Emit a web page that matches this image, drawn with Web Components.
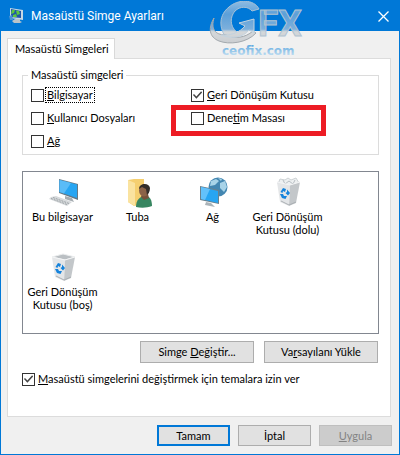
<!DOCTYPE html>
<html lang="tr">
<head>
<meta charset="utf-8">
<title>Masaüstü Simge Ayarları</title>
<style>
body{
  margin: 0;
  font: 11px/14px Lato, "Liberation Sans", sans-serif;
  color: #000;
}
.options{
  display: grid;
  grid-template-columns: 160px 1fr;
  row-gap: 7px;
}
.marked{
  position: relative;
}
.actions{
  display: flex;
  justify-content: flex-end;
  gap: 10px;
  margin: 7px 1px 8px 0;
}
.actions push-button{
  width: 114px;
  height: 22px;
}
.footer push-button{
  width: 73px;
  height: 21px;
}
.footer{
  display: flex;
  justify-content: flex-end;
  gap: 8px;
}
u{
  text-decoration-skip-ink: none;
}
</style>
</head>
<body>
<dialog-window>
  <span slot="title">Masaüstü Simge Ayarları</span>
  <brand-stamp slot="stamp"></brand-stamp>
  <tab-panel label="Masaüstü Simgeleri">
    <group-box label="Masaüstü simgeleri">
      <div class="options">
        <check-option focused><u>B</u>ilgisayar</check-option>
        <check-option checked><u>G</u>eri Dönüşüm Kutusu</check-option>
        <check-option><u>K</u>ullanıcı Dosyaları</check-option>
        <div class="marked"><check-option>Dene<u>t</u>im Masası</check-option><mark-box></mark-box></div>
        <check-option><u>A</u>ğ</check-option>
      </div>
    </group-box>
    <icon-list>
      <desktop-icon icon="computer">Bu bilgisayar</desktop-icon>
      <desktop-icon icon="user">Tuba</desktop-icon>
      <desktop-icon icon="network">Ağ</desktop-icon>
      <desktop-icon icon="full">Geri Dönüşüm Kutusu (dolu)</desktop-icon>
      <desktop-icon icon="empty">Geri Dönüşüm Kutusu (boş)</desktop-icon>
    </icon-list>
    <div class="actions">
      <push-button>Simge <u>D</u>eğiştir...</push-button>
      <push-button>Va<u>r</u>sayılanı Yükle</push-button>
    </div>
    <check-option checked><u>M</u>asaüstü simgelerini değiştirmek için temalara izin ver</check-option>
  </tab-panel>
  <div class="footer" slot="footer">
    <push-button primary>Tamam</push-button>
    <push-button>İptal</push-button>
    <push-button disabled><u>U</u>ygula</push-button>
  </div>
</dialog-window>

<script>
function attach (element, html) {
  var template = document.createElement('template')
  template.innerHTML = html
  element.attachShadow({ mode: 'open' })
  element.shadowRoot.appendChild(template.content.cloneNode(true))
}

class DialogWindow extends HTMLElement {
  constructor () {
    super()
    attach(this, /* HTML */ `
<style>
:host{
  display: flex;
  flex-direction: column;
  position: relative;
  box-sizing: border-box;
  min-height: 100vh;
  border: 1px solid #0078d7;
  background: #f0f0f0;
}
header{
  display: flex;
  align-items: center;
  height: 30px;
  padding: 0 10px 0 7px;
  background: #0078d7;
  color: #fff;
  font: 12px/16px Roboto, sans-serif;
}
header svg{
  flex: none;
}
h1{
  flex: 1;
  margin: 0 0 0 7px;
  font: inherit;
}
button{
  display: flex;
  padding: 0;
  border: 0;
  background: none;
}
main{
  flex: 1;
  display: flex;
  flex-direction: column;
  gap: 8px;
  padding: 7px 7px 8px 6px;
}
</style>
<header>
  <svg width="16" height="16" viewBox="0 0 16 16">
    <path d="M2 0 L15 2 L15 12 L2 10 Z" fill="#c5d8e4"/>
    <path d="M3 1 L13 3 L13 10 L3 9 Z" fill="#1f57a8"/>
    <path d="M4 2 L7 2 L6 5 L3 6 Z M8 2.500 L11 3 L12 6 L9 7 Z M5 7 L8 6 L9 9 L5 9 Z" fill="#5cc63f"/>
    <path d="M1 8 L4 7 L5 12 L2 12 Z" fill="#4c93d2"/>
    <path d="M7 11 L12 11 L12 13 L14 14 L12 15 L6 15 L4 13 Z" fill="#b9c3c9"/>
  </svg>
  <h1><slot name="title"></slot></h1>
  <button aria-label="Kapat">
    <svg width="11" height="11" viewBox="0 0 11 11"><path d="M.5 .5 L10.500 10.500 M10.500 .5 L.5 10.500" stroke="#fff" stroke-width="1.300"/></svg>
  </button>
</header>
<slot name="stamp"></slot>
<main>
  <slot></slot>
  <slot name="footer"></slot>
</main>
`)
  }
}

class BrandStamp extends HTMLElement {
  constructor () {
    super()
    attach(this, /* HTML */ `
<style>
:host{
  position: absolute;
  top: 0;
  right: 96px;
  width: 94px;
  pointer-events: none;
}
svg{
  display: block;
}
</style>
<svg width="94" height="58" viewBox="0 0 94 58">
  <defs>
    <linearGradient id="metal" x1="0" y1="0" x2="0" y2="44" gradientUnits="userSpaceOnUse">
      <stop offset="0" stop-color="#8fbce2"/>
      <stop offset=".3" stop-color="#5c9fd8"/>
      <stop offset=".64" stop-color="#7db0dc"/>
      <stop offset=".7" stop-color="#d5d8da"/>
      <stop offset="1" stop-color="#c9ccd0"/>
    </linearGradient>
    <linearGradient id="name" x1="0" y1="44" x2="0" y2="55" gradientUnits="userSpaceOnUse">
      <stop offset="0" stop-color="#5fa9e0"/>
      <stop offset="1" stop-color="#c5e0f2"/>
    </linearGradient>
  </defs>
  <path d="M43 10 L50 8 C45 -2 29 -2 20 6 C10 14 10 26 16 35 C20 37 26 37 31 33 C21 28 20 17 26 10 C31 5 39 5 43 10 Z" fill="url(#metal)" stroke="#a9c2d6"/>
  <path d="M5 17 C-1 27 0 36 10 40 C20 44 38 42 47 32 L44 30 C36 37 26 38 17 34 C5 34 2 27 5 17 Z" fill="url(#metal)" stroke="#a3a9ae"/>
  <path d="M12 34 C22 35 31 31 36 25 L30 22 L45 18 L45 32 L40 29 C34 37 22 38 12 34 Z" fill="url(#metal)" stroke="#c3d3df"/>
  <text x="49" y="35" font-family="Roboto" font-size="37" font-weight="bold" fill="url(#metal)" stroke="#b1c3d1">FX</text>
  <text x="13" y="54" font-family="DejaVu Sans" font-size="12" font-weight="bold" fill="url(#name)">ceofix.com</text>
</svg>
`)
  }
}

class TabPanel extends HTMLElement {
  constructor () {
    super()
    attach(this, /* HTML */ `
<style>
:host{
  flex: 1;
  display: flex;
  flex-direction: column;
  align-items: flex-start;
  padding-right: 1px;
}
.tab{
  z-index: 1;
  box-sizing: border-box;
  height: 21px;
  margin-bottom: -1px;
  padding: 2px 5px 2px 7px;
  border: 1px solid #d9d9d9;
  border-bottom: 0;
  background: #fff;
  color: inherit;
  font: inherit;
}
.panel{
  flex: 1;
  align-self: stretch;
  padding: 9px 11px 9px 14px;
  border: 1px solid #dcdcdc;
  background: #fff;
}
</style>
<button class="tab" role="tab" aria-selected="true"></button>
<div class="panel" role="tabpanel"><slot></slot></div>
`)
    this.shadowRoot.querySelector('.tab').textContent = this.getAttribute('label')
  }
}

class GroupBox extends HTMLElement {
  constructor () {
    super()
    attach(this, /* HTML */ `
<style>
:host{
  display: block;
  margin-bottom: 16px;
}
fieldset{
  margin: 0;
  padding: 5px 8px;
  border: 1px solid #dcdcdc;
}
legend{
  margin-left: -3px;
  padding: 0 3px;
}
</style>
<fieldset><legend></legend><slot></slot></fieldset>
`)
    this.shadowRoot.querySelector('legend').textContent = this.getAttribute('label')
  }
}

class CheckOption extends HTMLElement {
  constructor () {
    super()
    attach(this, /* HTML */ `
<style>
:host{
  display: block;
}
label{
  display: flex;
  align-items: center;
  gap: 2px;
  height: 16px;
}
input{
  appearance: none;
  flex: none;
  box-sizing: border-box;
  width: 13px;
  height: 13px;
  margin: 0;
  border: 1px solid #333;
  background: #fff;
}
input:checked::before{
  content: "";
  display: block;
  height: 11px;
  background: #444;
  clip-path: polygon(9% 50%, 18% 41%, 40% 64%, 83% 17%, 92% 27%, 40% 83%);
}
span{
  padding: 0 1px;
}
:host([focused]) span{
  outline: 1px dotted #000;
}
</style>
<label><input type="checkbox"><span><slot></slot></span></label>
`)
    this.shadowRoot.querySelector('input').checked = this.hasAttribute('checked')
  }
}

class MarkBox extends HTMLElement {
  constructor () {
    super()
    attach(this, /* HTML */ `
<style>
:host{
  position: absolute;
  top: -5px;
  left: -20px;
  box-sizing: border-box;
  width: 155px;
  height: 31px;
  border: 5px solid #ed1c24;
  pointer-events: none;
}
</style>
`)
  }
}

class IconList extends HTMLElement {
  constructor () {
    super()
    attach(this, /* HTML */ `
<style>
:host{
  display: grid;
  grid-template-columns: repeat(auto-fill, 75px);
  grid-auto-rows: 75px;
  box-sizing: border-box;
  min-height: 163px;
  padding: 4px 2px;
  border: 1px solid #828790;
}
</style>
<slot></slot>
`)
  }
}

var bin = `
    <path d="M5 6 L18 9 L17 30 L8 26 Z" fill="#e4e6e8"/>
    <path d="M18 9 L28 6 L24 27 L17 30 Z" fill="#c3c7ca"/>
    <path d="M5 6 L18 9 L28 6" fill="none" stroke="#f4f5f6"/>
    <path d="M9 25 L17 29 L24 26" fill="none" stroke="#abb0b4"/>
    <path d="M8.500 16 L11 12 L14 13 L13 16 L11 15 L10.500 17 Z M15 13.500 L18 17 L16 19.500 L13.500 17 L15 16 Z M8 18 L11 18 L12 20 L15 20 L13.500 23 L10 22 Z" fill="#1583dc"/>`

var icons = {
  computer: `
    <path d="M12 3 L31 8 L31 24 L12 17 Z" fill="#657986"/>
    <path d="M12.500 4 L30 8.500 L30 22 L12.500 16 Z" fill="#27a5f2"/>
    <path d="M12.500 4 L24 7 L17 17.500 L12.500 16 Z" fill="#5abcf7"/>
    <path d="M18 20 L25 22 L27 26 L18 23 Z" fill="#a6adb2"/>
    <path d="M4 21 L9 20 L25 26 L20 30 L2 23 Z" fill="#d7dadc"/>
    <path d="M4 22.500 L20 28.500 M6 21.500 L22 27.500" stroke="#9aa1a5" stroke-dasharray="2 1"/>`,
  user: `
    <path d="M6 4 L12 3 L22 3 L22 28 L12 30 L6 26 Z" fill="#f5cf70"/>
    <path d="M6 4 L13 7 L13 30 L6 26 Z" fill="#fae3a0"/>
    <path d="M14 31 C14 24 18 20 23 20 C28 20 30 24 30 30 C25 32 19 32 14 31 Z" fill="#388661"/>
    <path d="M20 18 L26 18 L27 22 L22 24 L19 21 Z" fill="#75513b"/>
    <ellipse cx="22" cy="14.500" rx="5" ry="6" fill="#8b6248"/>
    <path d="M17 13 C17 7 27 6 28 12 C28 16 26 18 25 19 L24 13 L20 11 Z" fill="#332d2a"/>`,
  network: `
    <circle cx="21" cy="11" r="9.500" fill="#4386b1"/>
    <path d="M14 5 L19 3 L22 5 L18 9 L13 10 Z M23 7 L28 5 L30 11 L27 16 L23 12 Z M21 2 L25 3 L24 5 Z" fill="#a8d3e8"/>
    <path d="M3 10 L22 14 L22 28 L3 24 Z" fill="#69818e"/>
    <path d="M4 11 L21 15 L21 27 L4 23 Z" fill="#27a5f2"/>
    <path d="M4 11 L13 13 L8 24 L4 23 Z" fill="#63c1fa"/>
    <path d="M9 26 L14 27 L18 31 L8 29 Z" fill="#aab3b8"/>`,
  full: `
    <path d="M6 8 L8 3 L13 4 L16 2 L19 4 L24 2 L27 7 L18 11 Z" fill="#edf0f1" stroke="#cdd2d5"/>
    <path d="M11 4 L13 8 L17 5 L21 8 L23 4" fill="none" stroke="#b8bec3"/>` + bin,
  empty: `
    <path d="M5 6 L16 3 L28 6 L18 9 Z" fill="#babfc3" stroke="#eceeef"/>` + bin
}

class DesktopIcon extends HTMLElement {
  constructor () {
    super()
    attach(this, /* HTML */ `
<style>
:host{
  display: flex;
  flex-direction: column;
  align-items: center;
  gap: 2px;
  line-height: 13px;
  text-align: center;
}
svg{
  flex: none;
}
</style>
<svg width="32" height="32" viewBox="0 0 32 32">${icons[this.getAttribute('icon')]}</svg>
<span><slot></slot></span>
`)
  }
}

class PushButton extends HTMLElement {
  constructor () {
    super()
    attach(this, /* HTML */ `
<style>
:host{
  display: block;
}
button{
  display: block;
  width: 100%;
  height: 100%;
  padding: 0;
  border: 1px solid #adadad;
  background: #e1e1e1;
  color: #000;
  font: inherit;
}
:host([primary]) button{
  border: 2px solid #0078d7;
}
button:disabled{
  border-color: #bfbfbf;
  background: #ccc;
  color: #838383;
}
</style>
<button><slot></slot></button>
`)
    this.shadowRoot.querySelector('button').disabled = this.hasAttribute('disabled')
  }
}

window.customElements.define('dialog-window', DialogWindow)
window.customElements.define('brand-stamp', BrandStamp)
window.customElements.define('tab-panel', TabPanel)
window.customElements.define('group-box', GroupBox)
window.customElements.define('check-option', CheckOption)
window.customElements.define('mark-box', MarkBox)
window.customElements.define('icon-list', IconList)
window.customElements.define('desktop-icon', DesktopIcon)
window.customElements.define('push-button', PushButton)
</script>
</body>
</html>
